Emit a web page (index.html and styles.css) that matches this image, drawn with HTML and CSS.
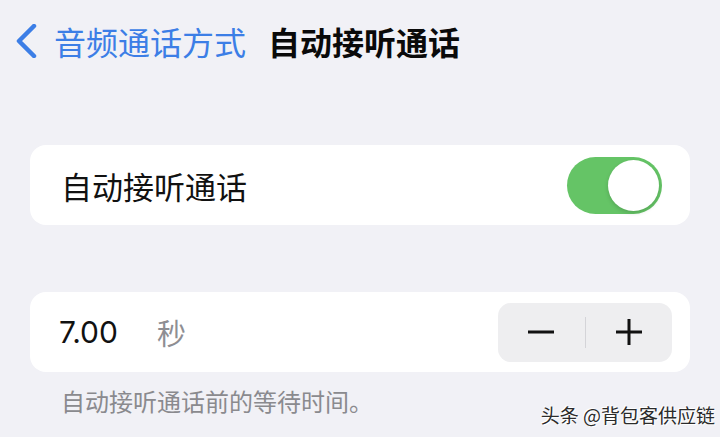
FILE: index.html
```html
<!DOCTYPE html>
<html lang="zh-CN">
<head>
    <meta charset="UTF-8">
    <meta name="viewport" content="width=device-width, initial-scale=1.0">
    <title>自动接听通话</title>
    <link rel="stylesheet" href="styles.css">
</head>
<body>
    <nav class="nav">
        <a class="back" href="#">
            <svg class="chevron" width="22" height="34" viewBox="0 0 22 34">
                <path d="M18 2 L3 17 L18 32" fill="none" stroke="#3c7ee6" stroke-width="4.5" stroke-linecap="round" stroke-linejoin="round"/>
            </svg>
            <span class="back-label">音频通话方式</span>
        </a>
        <h1 class="title">自动接听通话</h1>
    </nav>

    <div class="card card-toggle">
        <span class="row-label">自动接听通话</span>
        <div class="switch on">
            <div class="knob"></div>
        </div>
    </div>

    <div class="card card-stepper">
        <div class="value">
            <span class="number">7.00</span>
            <span class="unit">秒</span>
        </div>
        <div class="stepper">
            <button class="step" aria-label="减少">
                <svg width="28" height="28" viewBox="0 0 28 28"><path d="M1 14 H27" stroke="#111" stroke-width="3"/></svg>
            </button>
            <span class="step-divider"></span>
            <button class="step" aria-label="增加">
                <svg width="28" height="28" viewBox="0 0 28 28"><path d="M1 14 H27 M14 1 V27" stroke="#111" stroke-width="3"/></svg>
            </button>
        </div>
    </div>

    <p class="footnote">自动接听通话前的等待时间。</p>

    <div class="watermark">头条 @背包客供应链</div>
</body>
</html>
```

FILE: styles.css
```css
body {
    margin: 0;
    width: 720px;
    height: 437px;
    overflow: hidden;
    position: relative;
    background: #f1f1f6;
    font-family: 'Noto Sans CJK SC', 'Noto Sans', sans-serif;
    color: #111;
}

.nav {
    display: flex;
    align-items: center;
    height: 82px;
    padding-left: 16px;
}

.back {
    display: flex;
    align-items: center;
    text-decoration: none;
    color: #3c7ee6;
}

.chevron {
    display: block;
}

.back-label {
    margin-left: 16px;
    font-size: 32px;
    line-height: 1;
}

.title {
    margin: 0 0 0 22px;
    font-size: 32px;
    font-weight: 700;
    line-height: 1;
    color: #0a0a0a;
}

.card {
    display: flex;
    align-items: center;
    justify-content: space-between;
    height: 80px;
    margin: 0 30px;
    background: #fff;
    border-radius: 16px;
}

.card-toggle {
    margin-top: 63px;
    padding: 0 28px 0 31px;
}

.row-label {
    font-size: 31px;
    line-height: 1;
}

.switch {
    display: flex;
    align-items: center;
    justify-content: flex-end;
    width: 95px;
    height: 57px;
    padding: 0 3px;
    box-sizing: border-box;
    border-radius: 29px;
    background: #e5e5ea;
}

.switch.on {
    background: #65c466;
}

.knob {
    width: 51px;
    height: 51px;
    border-radius: 50%;
    background: #fff;
    box-shadow: 0 2px 4px rgba(0, 0, 0, 0.15);
}

.card-stepper {
    margin-top: 67px;
    padding: 0 18px 0 29px;
}

.value {
    display: flex;
    align-items: center;
}

.number {
    font-family: 'Inter', 'Noto Sans', sans-serif;
    font-size: 30px;
    letter-spacing: 0;
    line-height: 1;
}

.unit {
    margin-left: 39px;
    font-size: 29px;
    line-height: 1;
    color: #8e8e93;
}

.stepper {
    display: flex;
    align-items: center;
    width: 174px;
    height: 59px;
    border-radius: 13px;
    background: #eeeef0;
}

.step {
    flex: 1;
    display: flex;
    align-items: center;
    justify-content: center;
    height: 100%;
    padding: 0;
    border: none;
    background: none;
    cursor: pointer;
}

.step svg {
    display: block;
}

.step-divider {
    width: 1px;
    height: 31px;
    background: #d4d4d8;
}

.footnote {
    margin: 17px 0 0 61px;
    font-size: 24px;
    line-height: 1;
    color: #8a8a8e;
}

.watermark {
    position: absolute;
    right: 5px;
    bottom: 13px;
    font-size: 19px;
    line-height: 1;
    color: #2b2b2b;
    text-shadow: 1px 1px 0 #fff, -1px -1px 0 #fff;
}
```
